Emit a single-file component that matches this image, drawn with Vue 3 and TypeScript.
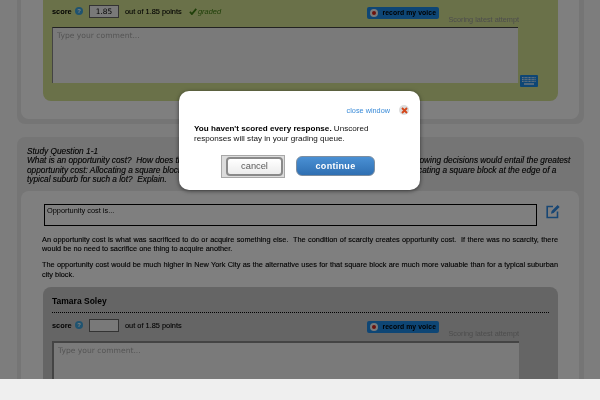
<script setup lang="ts">
interface Panel {
  key: string
  name?: string
  value: string
}
const graded: Panel = { key: 'a', value: '1.85' }
const pending: Panel = { key: 'b', name: 'Tamara Soley', value: '' }
const keyRows = [0, 1, 2]
const keyCols = [0, 1, 2, 3, 4, 5, 6, 7, 8, 9]
const questionTitle = 'Study Question 1-1'
const questionBody =
  'What is an opportunity cost?  How does the concept of scarcity relate to opportunity cost?  Which of the following decisions would entail the greatest opportunity cost: Allocating a square block in the center of New York City for use as a big parking lot or allocating a square block at the edge of a\ntypical suburb for such a lot?  Explain.'
const paraOne =
  'An opportunity cost is what was sacrificed to do or acquire something else.  The condition of scarcity creates opportunity cost.  If there was no scarcity, there would be no need to sacrifice one thing to acquire another.'
const paraTwo =
  'The opportunity cost would be much higher in New York City as the alternative uses for that square block are much more valuable than for a typical suburban city block.'
</script>

<template>
  <div class="root">
    <div class="page">
      <section class="card first">
        <div class="inner">
          <div class="panel green">
            <div class="row">
              <span class="score">score</span>
              <span class="help">?</span>
              <span class="num">{{ graded.value }}</span>
              <span class="outof">out of 1.85 points</span>
              <span class="graded">
                <svg width="8" height="7" viewBox="0 0 9 8"><path d="M1 4.2 3.2 7 8.2 1" fill="none" stroke="#3f7f12" stroke-width="2"/></svg>
                graded
              </span>
              <span class="record"><i class="dot"></i>record my voice</span>
              <span class="latest">Scoring latest attempt</span>
            </div>
            <div class="comment-row">
              <div class="comment">Type your comment...</div>
              <span class="kbd">
                <svg width="14" height="8" viewBox="0 0 14 8">
                  <g v-for="r in keyRows" :key="r">
                    <rect v-for="c in keyCols" :key="c" :x="c * 1.4" :y="r * 1.9" width="1" height="1.2" fill="#cfe6fa"/>
                  </g>
                  <rect x="2" y="6.4" width="10" height="1.2" fill="#ffffff"/>
                </svg>
              </span>
            </div>
          </div>
        </div>
      </section>

      <section class="card second">
        <p class="question">{{ questionTitle }}<br>{{ questionBody }}</p>
        <div class="inner answers">
          <div class="answer-row">
            <div class="answer">Opportunity cost is...</div>
            <svg class="edit" width="14" height="15" viewBox="0 0 14 15">
              <path d="M7 2.5H1.2V13.5H11.5V7.5" fill="none" stroke="#2f8ce8" stroke-width="1.6"/>
              <path d="M5 9.8 5.6 7 11.6 1 13.6 3 7.6 9Z" fill="#2f8ce8"/>
            </svg>
          </div>
          <p class="para">{{ paraOne }}</p>
          <p class="para">{{ paraTwo }}</p>
          <div class="panel gray">
            <h3 class="name">{{ pending.name }}</h3>
            <div class="row">
              <span class="score">score</span>
              <span class="help">?</span>
              <span class="num">{{ pending.value }}</span>
              <span class="outof">out of 1.85 points</span>
              <span class="record"><i class="dot"></i>record my voice</span>
              <span class="latest">Scoring latest attempt</span>
            </div>
            <div class="comment-row">
              <div class="comment">Type your comment...</div>
            </div>
          </div>
        </div>
      </section>

      <div class="overlay"></div>

      <div class="modal">
        <div class="close-line">
          <a class="close-link">close window</a>
          <span class="close-x">
            <svg width="7" height="7" viewBox="0 0 7 7"><path d="M1 1 6 6M6 1 1 6" stroke="#d4471a" stroke-width="1.9"/></svg>
          </span>
        </div>
        <p class="message"><b>You haven't scored every response.</b> Unscored responses will stay in your grading queue.</p>
        <div class="actions">
          <span class="focus"><button class="btn cancel">cancel</button></span>
          <button class="btn continue">continue</button>
        </div>
      </div>
    </div>
  </div>
</template>

<style>
html, body { margin: 0; background: #efefef; }
</style>

<style scoped>
.root {
  width: 600px;
  height: 400px;
  overflow: hidden;
  background: #efefef;
  font-family: "Liberation Sans", Arial, sans-serif;
  filter: blur(0.3px);
}
.page {
  position: relative;
  height: 379px;
  overflow: hidden;
  background: #fbfbfb;
  padding: 0 16px 0 17px;
  box-sizing: border-box;
}
.card {
  background: #ebebeb;
  padding: 0 5px 5px 4px;
  border-radius: 8px;
}
.first {
  margin-top: -10px;
  margin-bottom: 13px;
}
.inner {
  background: #ffffff;
  border-radius: 8px;
  padding: 0 21px 18px 22px;
}
.question {
  margin: 0;
  padding: 10px 4px 6px 6px;
  height: 38px;
  font-size: 8.3px;
  line-height: 9.45px;
  font-style: italic;
  color: #000;
  white-space: pre-wrap;
  -webkit-text-stroke: 0.12px #000;
}
.answers {
  padding-top: 13px;
}
.panel {
  border-radius: 8px;
  padding: 15px 9px 18px;
}
.green { background: #d4e292; }
.gray { background: #cacaca; margin-top: 8px; padding-top: 8px; height: 200px; }
.name {
  margin: 0 0 6px;
  font-size: 8.5px;
  line-height: 12px;
  padding-bottom: 5px;
  border-bottom: 1px dotted #000;
  color: #000;
}
.row {
  display: flex;
  align-items: flex-start;
  height: 20px;
  font-size: 7.4px;
  line-height: 13px;
  color: #000;
}
.score { font-weight: bold; width: 23px; }
.help {
  width: 8px;
  height: 8px;
  margin: 2px 0 0 0;
  border-radius: 50%;
  background: #3ea6e0;
  color: #fff;
  font-size: 6px;
  font-weight: bold;
  line-height: 8px;
  text-align: center;
}
.num {
  width: 28px;
  height: 11px;
  margin-left: 6px;
  border: 1px solid #666;
  background: #f2f2f2;
  font-size: 7.4px;
  line-height: 11px;
  text-align: center;
  font-family: "DejaVu Sans", sans-serif;
  color: #000;
}
.outof { margin-left: 6px; width: 64px; white-space: nowrap; -webkit-text-stroke: 0.1px #000; }
.graded {
  display: inline-flex;
  align-items: center;
  gap: 1px;
  font-style: italic;
  color: #3f7f12;
  white-space: nowrap;
}
.record {
  display: flex;
  align-items: center;
  gap: 4px;
  height: 12px;
  width: 72px;
  box-sizing: border-box;
  padding-left: 3px;
  margin: 2px 0 0 auto;
  border-radius: 2px;
  background: #1c8ceb;
  font-size: 6.8px;
  font-weight: bold;
  line-height: 12px;
  letter-spacing: 0.1px;
  white-space: nowrap;
  color: #000;
}
.dot {
  width: 4px;
  height: 4px;
  border-radius: 50%;
  background: #d8221a;
  border: 2.5px solid #f4f4f4;
  flex: none;
}
.latest {
  margin: 8px 30px 0 9px;
  font-size: 7.3px;
  line-height: 13px;
  color: #9a9a9a;
  white-space: nowrap;
}
.comment-row {
  display: flex;
  gap: 2px;
  margin-top: 2px;
}
.comment {
  width: 465px;
  height: 55px;
  border-top: 1px solid #444;
  border-left: 1px solid #888;
  background: #f5f5f5;
  font-family: "DejaVu Sans", sans-serif;
  font-size: 7.6px;
  line-height: 16px;
  text-indent: 4px;
  color: #aaa;
  flex: none;
}
.gray .comment {
  border-top-width: 2px;
  border-left-width: 2px;
  border-color: #888;
  height: 60px;
}
.kbd {
  align-self: flex-end;
  width: 18px;
  height: 12px;
  margin-bottom: -4px;
  display: flex;
  align-items: center;
  justify-content: center;
  background: #1c8ceb;
  border-radius: 1px;
}
.answer-row {
  display: flex;
  align-items: flex-start;
  gap: 9px;
  margin: 0 -2px 0 1px;
}
.answer {
  width: 491px;
  height: 20px;
  flex: none;
  border: 1px solid #000;
  font-size: 7.4px;
  line-height: 12px;
  text-indent: 2px;
  color: #000;
}
.edit { flex: none; }
.para {
  margin: 8.5px 0 0 -1px;
  font-size: 7.35px;
  line-height: 9.3px;
  color: #000;
  text-align: justify;
  white-space: pre-wrap;
  -webkit-text-stroke: 0.12px #000;
}
.para + .para { margin-top: 7.4px; }
.overlay {
  position: absolute;
  inset: 0;
  background: rgba(0, 0, 0, 0.5);
}
.modal {
  position: absolute;
  left: 179px;
  top: 91px;
  width: 241px;
  height: 99px;
  box-sizing: border-box;
  padding: 14px 11px 0 15px;
  background: #fff;
  border-radius: 10px;
  box-shadow: 0 1px 4px rgba(0, 0, 0, 0.55);
}
.close-line {
  display: flex;
  align-items: center;
  justify-content: flex-end;
  gap: 9px;
  height: 10px;
}
.close-link {
  font-size: 7.3px;
  color: #3a8bd8;
  white-space: nowrap;
}
.close-x {
  width: 10px;
  height: 10px;
  border-radius: 50%;
  background: #dcdcdc;
  display: flex;
  align-items: center;
  justify-content: center;
}
.message {
  margin: 9px 0 0;
  font-size: 8.1px;
  line-height: 9.6px;
  color: #111;
  width: 182px;
}
.message b { color: #000; }
.actions {
  display: flex;
  align-items: center;
  gap: 11px;
  margin: 11.5px 0 0 27px;
}
.focus {
  display: block;
  padding: 1px 1px 1px 4px;
  background: #dcdcdc;
  border: 1px solid #a8a8a8;
}
.btn {
  display: block;
  padding: 0;
  font-family: "Liberation Sans", Arial, sans-serif;
  font-size: 9.3px;
  border-radius: 4px;
}
.cancel {
  width: 57px;
  height: 19px;
  border: 2px solid #8a8a8a;
  background: linear-gradient(#ffffff, #ececec);
  color: #5a5a5a;
}
.continue {
  width: 79px;
  height: 20px;
  border-radius: 6px;
  border: 1px solid #7d8ea0;
  background: linear-gradient(#4a90d4, #2f6fb2);
  color: #fff;
  font-size: 9px;
  font-weight: bold;
  letter-spacing: 0.3px;
}
</style>
